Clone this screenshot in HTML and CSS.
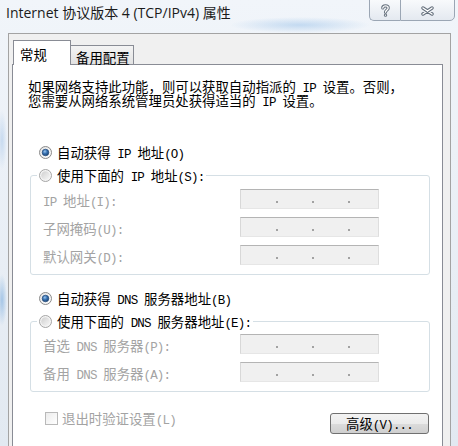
FILE: index.html
```html
<!DOCTYPE html>
<html lang="zh-CN">
<head>
<meta charset="utf-8">
<title>Internet 协议版本 4 (TCP/IPv4) 属性</title>
<link rel="stylesheet" href="styles.css">
</head>
<body>
<svg class="defs" width="0" height="0" aria-hidden="true">
  <defs>
    <linearGradient id="rOn" x1="0" y1="0" x2="1" y2="1">
      <stop offset="0" stop-color="#e2e2e2"/>
      <stop offset="1" stop-color="#ffffff"/>
    </linearGradient>
    <radialGradient id="rDot" cx="40%" cy="35%" r="70%">
      <stop offset="0" stop-color="#9cc6ee"/>
      <stop offset="0.45" stop-color="#3a74b4"/>
      <stop offset="1" stop-color="#183f6c"/>
    </radialGradient>
    <linearGradient id="rOff" x1="0" y1="0" x2="1" y2="1">
      <stop offset="0" stop-color="#cfcfcf"/>
      <stop offset="1" stop-color="#f7f7f7"/>
    </linearGradient>
  </defs>
</svg>

<div class="titlebar">
  <div class="title">Internet 协议版本 4 (TCP/IPv4) 属性</div>
  <div class="caps">
    <div class="cap help">
      <svg width="9" height="13" viewBox="0 0 9 13">
        <g fill="none" stroke-linecap="round" stroke-linejoin="round">
          <path d="M1.8 4 C1.8 1.2 7.2 1.2 7.2 4 C7.2 5.9 4.5 6 4.5 8.2" stroke="#65707d" stroke-width="3.2"/>
          <path d="M4.5 11.1 L4.5 11.2" stroke="#65707d" stroke-width="3.2"/>
          <path d="M1.8 4 C1.8 1.2 7.2 1.2 7.2 4 C7.2 5.9 4.5 6 4.5 8.2" stroke="#fff" stroke-width="1.3"/>
          <path d="M4.5 11.1 L4.5 11.2" stroke="#fff" stroke-width="1.3"/>
        </g>
      </svg>
    </div>
    <div class="cap close">
      <svg width="13" height="10" viewBox="0 0 13 10">
        <g fill="none" stroke-linecap="round">
          <path d="M2 2 L11 8 M11 2 L2 8" stroke="#65707d" stroke-width="3.4"/>
          <path d="M2 2 L11 8 M11 2 L2 8" stroke="#fff" stroke-width="1.5"/>
        </g>
      </svg>
    </div>
  </div>
</div>

<div class="client">
  <div class="tabs">
    <div class="tab sel">常规</div>
    <div class="tab other">备用配置</div>
  </div>
  <div class="panel">
    <p class="intro">如果网络支持此功能，则可以获取自动指派的<span class="l"> IP </span>设置。否则，<br>您需要从网络系统管理员处获得适当的<span class="l"> IP </span>设置。</p>

    <div class="opt top-opt">
      <svg class="radio" width="13" height="13" viewBox="0 0 13 13"><circle cx="6.5" cy="6.5" r="6" fill="url(#rOn)" stroke="#8a8a8a"/><circle cx="6.5" cy="6.5" r="3.3" fill="url(#rDot)" stroke="#23497a" stroke-width=".7"/></svg>
      <span>自动获得<span class="l"> IP </span>地址<span class="l">(O)</span></span>
    </div>

    <fieldset class="group">
      <legend>
        <div class="opt">
          <svg class="radio" width="13" height="13" viewBox="0 0 13 13"><circle cx="6.5" cy="6.5" r="6" fill="#f4f4f4" stroke="#a5a5a5"/><circle cx="6.5" cy="6.5" r="4.3" fill="url(#rOff)"/></svg>
          <span>使用下面的<span class="l"> IP </span>地址<span class="l">(S):</span></span>
        </div>
      </legend>
      <div class="field first">
        <span class="lbl"><span class="l">IP </span>地址<span class="l">(I):</span></span>
        <div class="ip"><i class="dot"></i><i class="dot"></i><i class="dot"></i></div>
      </div>
      <div class="field">
        <span class="lbl">子网掩码<span class="l">(U):</span></span>
        <div class="ip"><i class="dot"></i><i class="dot"></i><i class="dot"></i></div>
      </div>
      <div class="field">
        <span class="lbl">默认网关<span class="l">(D):</span></span>
        <div class="ip"><i class="dot"></i><i class="dot"></i><i class="dot"></i></div>
      </div>
    </fieldset>

    <div class="opt dns-opt">
      <svg class="radio" width="13" height="13" viewBox="0 0 13 13"><circle cx="6.5" cy="6.5" r="6" fill="url(#rOn)" stroke="#8a8a8a"/><circle cx="6.5" cy="6.5" r="3.3" fill="url(#rDot)" stroke="#23497a" stroke-width=".7"/></svg>
      <span>自动获得<span class="l"> DNS </span>服务器地址<span class="l">(B)</span></span>
    </div>

    <fieldset class="group">
      <legend>
        <div class="opt">
          <svg class="radio" width="13" height="13" viewBox="0 0 13 13"><circle cx="6.5" cy="6.5" r="6" fill="#f4f4f4" stroke="#a5a5a5"/><circle cx="6.5" cy="6.5" r="4.3" fill="url(#rOff)"/></svg>
          <span>使用下面的<span class="l"> DNS </span>服务器地址<span class="l">(E):</span></span>
        </div>
      </legend>
      <div class="field first dns-first">
        <span class="lbl">首选<span class="l"> DNS </span>服务器<span class="l">(P):</span></span>
        <div class="ip"><i class="dot"></i><i class="dot"></i><i class="dot"></i></div>
      </div>
      <div class="field">
        <span class="lbl">备用<span class="l"> DNS </span>服务器<span class="l">(A):</span></span>
        <div class="ip"><i class="dot"></i><i class="dot"></i><i class="dot"></i></div>
      </div>
    </fieldset>

    <div class="bottom">
      <div class="check"><span class="box"></span><span>退出时验证设置<span class="l">(L)</span></span></div>
      <button class="btn" type="button">高级<span class="l">(V)...</span></button>
    </div>
  </div>
</div>
</body>
</html>
```
FILE: styles.css
```css
* { box-sizing: border-box; }

html, body { margin: 0; padding: 0; }

body {
  width: 458px;
  height: 446px;
  overflow: hidden;
  font-family: "Noto Sans CJK SC", sans-serif;
  font-size: 13.4px;
  color: #000;
  background:
    radial-gradient(70px 8px at 300px 25px, rgba(140, 185, 230, 0.45), transparent),
    radial-gradient(5px 26px at 2px 300px, rgba(110, 165, 220, 0.55), transparent),
    radial-gradient(5px 30px at 2px 140px, rgba(130, 175, 225, 0.35), transparent),
    linear-gradient(#f1f5fa, #e2e9f1);
}

.defs { display: block; width: 0; height: 0; overflow: hidden; }

.l {
  font-family: "Liberation Mono", monospace;
  font-size: 12.5px;
  letter-spacing: -0.8px;
  line-height: 0;
}

/* title bar */
.titlebar {
  display: flex;
  justify-content: space-between;
  height: 33px;
}

.title {
  padding: 4px 0 0 6px;
  font-family: "Open Sans", "Noto Sans CJK SC", sans-serif;
  font-size: 14px;
  line-height: 18px;
  color: #1b1b1b;
  white-space: nowrap;
}

.caps {
  display: flex;
  height: 22px;
  margin: -1px 3px 0 0;
}

.cap {
  height: 22px;
  display: flex;
  align-items: center;
  justify-content: center;
  border: 1px solid #9ba6b4;
  background: linear-gradient(#f8fafc, #e4e9f0);
}

.cap.help {
  width: 31px;
  border-right: none;
  border-radius: 0 0 0 5px;
  padding-top: 1px;
}

.cap.close {
  width: 55px;
  border-radius: 0 0 5px 0;
  padding-top: 1px;
}

/* client area */
.client {
  margin-left: 8px;
  width: 443px;
  height: 413px;
  border: 1px solid #a3a3a3;
  border-bottom: none;
  background: #f0f0f0;
  padding-left: 3px;
}

.tabs {
  display: flex;
  align-items: flex-end;
  height: 24px;
  margin-top: 6px;
  padding-left: 1px;
}

.tab {
  border: 1px solid #898c95;
  border-bottom: none;
  line-height: 14px;
  white-space: nowrap;
}

.tab.sel {
  width: 58px;
  height: 25px;
  margin-bottom: -1px;
  padding: 6px 0 0 6px;
  background: #fff;
  position: relative;
  z-index: 1;
}

.tab.other {
  width: 64px;
  height: 19px;
  margin-left: -1px;
  padding: 4px 0 0 5px;
  background: linear-gradient(#f4f4f4, #e2e2e2);
}

.panel {
  width: 431px;
  height: 400px;
  border: 1px solid #898c95;
  background: #fff;
  padding-top: 14px;
}

.intro {
  margin: 0 0 0 15px;
  line-height: 14px;
  white-space: nowrap;
}

.opt {
  display: flex;
  align-items: center;
  gap: 5px;
  height: 20px;
  line-height: 16px;
  white-space: nowrap;
}

.radio { display: block; flex: none; }

.top-opt { margin: 35px 0 0 26px; }
.dns-opt { margin: 13px 0 0 26px; }

.group {
  width: 400px;
  min-inline-size: 0;
  margin: 3px 0 0 17px;
  padding: 0 0 9px 0;
  border: 1px solid #d5dfe5;
  border-radius: 3px;
}

.group legend {
  padding: 0 2px;
  margin-left: 6px;
}

.field {
  display: flex;
  align-items: center;
  height: 20px;
  margin: 8px 0 0 12px;
}

.field.first { margin-top: 4px; }
.field.dns-first { margin-top: 3px; }

.lbl {
  width: 197px;
  flex: none;
  padding-top: 2px;
  line-height: 16px;
  color: #a3a3a3;
  white-space: nowrap;
}

.ip {
  width: 139px;
  height: 20px;
  flex: none;
  display: flex;
  align-items: flex-end;
  gap: 34px;
  padding: 0 0 5px 35px;
  border: 1px solid;
  border-color: #b4b4b4 #dedede #e6e6e6 #d8d8d8;
  background: #f0f0f0;
}

.dot {
  display: block;
  width: 2px;
  height: 2px;
  background: #a2a2a2;
}

.bottom {
  display: flex;
  justify-content: space-between;
  align-items: flex-start;
  margin-top: 20px;
  padding: 0 13px 0 32px;
}

.check {
  display: flex;
  align-items: center;
  gap: 4px;
  height: 13px;
  line-height: 13px;
  color: #a3a3a3;
  white-space: nowrap;
}

.box {
  display: block;
  width: 13px;
  height: 13px;
  border: 1px solid #b9b9b9;
  background: linear-gradient(135deg, #ececec, #ffffff);
}

.btn {
  width: 99px;
  height: 21px;
  margin-top: 1px;
  padding: 0;
  border: 1px solid #707070;
  border-radius: 3px;
  background: linear-gradient(#f3f3f3 0%, #ebebeb 50%, #dcdcdc 50%, #cfcfcf 100%);
  font: inherit;
  line-height: 19px;
  color: #000;
  text-align: center;
  white-space: nowrap;
}
```
